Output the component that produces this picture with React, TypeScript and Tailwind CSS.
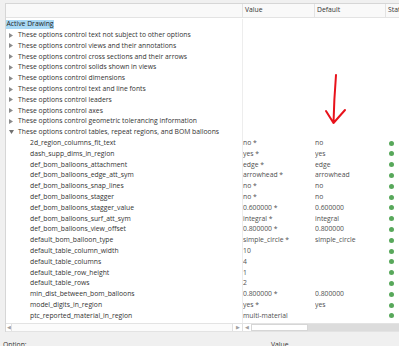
const categories = [
  "These options control text not subject to other options",
  "These options control views and their annotations",
  "These options control cross sections and their arrows",
  "These options control solids shown in views",
  "These options control dimensions",
  "These options control text and line fonts",
  "These options control leaders",
  "These options control axes",
  "These options control geometric tolerancing information",
];

const options: [string, string, string][] = [
  ["2d_region_columns_fit_text", "no *", "no"],
  ["dash_supp_dims_in_region", "yes *", "yes"],
  ["def_bom_balloons_attachment", "edge *", "edge"],
  ["def_bom_balloons_edge_att_sym", "arrowhead *", "arrowhead"],
  ["def_bom_balloons_snap_lines", "no *", "no"],
  ["def_bom_balloons_stagger", "no *", "no"],
  ["def_bom_balloons_stagger_value", "0.600000 *", "0.600000"],
  ["def_bom_balloons_surf_att_sym", "integral *", "integral"],
  ["def_bom_balloons_view_offset", "0.800000 *", "0.800000"],
  ["default_bom_balloon_type", "simple_circle *", "simple_circle"],
  ["default_table_column_width", "10", ""],
  ["default_table_columns", "4", ""],
  ["default_table_row_height", "1", ""],
  ["default_table_rows", "2", ""],
  ["min_dist_between_bom_balloons", "0.800000 *", "0.800000"],
  ["model_digits_in_region", "yes *", "yes"],
  ["ptc_reported_material_in_region", "multi-material", ""],
  ["reference_bom_balloon_text", "DEF *", "ref"],
];

function Caret({ open }: { open?: boolean }) {
  return open ? (
    <svg width="5" height="4" viewBox="0 0 5 4" className="ml-[3px] mr-[4px] shrink-0">
      <polygon points="0,0 5,0 2.5,4" fill="#707070" />
    </svg>
  ) : (
    <svg width="4" height="5" viewBox="0 0 4 5" className="ml-[3px] mr-[5px] shrink-0">
      <polygon points="0,0 4,2.5 0,5" fill="#8a8a8a" />
    </svg>
  );
}

function Row({
  tree,
  value = "",
  def = "",
  dot,
}: {
  tree: React.ReactNode;
  value?: string;
  def?: string;
  dot?: boolean;
}) {
  return (
    <div className="flex h-[10.8px] items-center whitespace-nowrap">
      <div className="w-[237px] shrink-0 flex items-center overflow-hidden border-r border-[#ededed] h-full">
        {tree}
      </div>
      <div className="w-[72px] shrink-0 text-[#505050] overflow-hidden">{value}</div>
      <div className="w-[71px] shrink-0 text-[#505050] overflow-hidden">{def}</div>
      <div className="flex-1 flex items-center">
        {dot && <span className="ml-[3px] w-[5px] h-[5px] rounded-full bg-[#58a85b]" />}
      </div>
    </div>
  );
}

export default function App() {
  return (
    <div
      className="w-[399px] h-[346px] overflow-hidden bg-[#f0f0f0] relative text-[6.8px] text-[#333333]"
      style={{ fontFamily: '"Open Sans", "Noto Sans", sans-serif' }}
    >
      <div className="h-[3px]" />
      <div className="ml-[5px] w-[420px] border-l border-t border-[#d6d6d6] bg-white flex flex-col h-[329px]">
        {/* header */}
        <div className="flex h-[14px] border-b border-[#e3e3e3] bg-[#f9f9f9] items-center whitespace-nowrap">
          <div className="w-[237px] h-full border-r border-[#e3e3e3]" />
          <div className="w-[72px] h-full border-r border-[#e3e3e3] pl-[2px] flex items-center">Value</div>
          <div className="w-[71px] h-full border-r border-[#e3e3e3] pl-[2px] flex items-center">Default</div>
          <div className="flex-1 pl-[2px] flex items-center">Status</div>
        </div>

        {/* body */}
        <div className="h-[304.5px] overflow-hidden pt-[1px]">
          <Row
            tree={
              <span className="bg-[#a9d9f5] h-[8.5px] leading-[8.5px] px-[0.5px] text-[#1e1e1e]">
                Active Drawing
              </span>
            }
          />
          {categories.map((c) => (
            <Row
              key={c}
              tree={
                <>
                  <Caret />
                  <span>{c}</span>
                </>
              }
            />
          ))}
          <Row
            tree={
              <>
                <Caret open />
                <span>These options control tables, repeat regions, and BOM balloons</span>
              </>
            }
          />
          {options.map(([name, value, def]) => (
            <Row
              key={name}
              tree={<span className="pl-[24px]">{name}</span>}
              value={value}
              def={def}
              dot
            />
          ))}
        </div>

        {/* horizontal scrollbars */}
        <div className="flex h-[9.5px] border-t border-b border-[#e3e3e3] text-[#a0a0a0] text-[5px]">
          <div className="w-[5px] flex items-center justify-center">◀</div>
          <div className="w-[222px] bg-[#fbfbfb] border-x border-[#e0e0e0]" />
          <div className="w-[9px] flex items-center justify-center">▶</div>
          <div className="w-[1px] bg-[#e0e0e0]" />
          <div className="w-[8px] flex items-center justify-center">◀</div>
          <div className="w-[57px] bg-white border border-[#d6d6d6]" />
          <div className="flex-1 bg-[#dcdcdc]" />
        </div>
      </div>

      {/* bottom panel */}
      <div className="flex pt-[8px] whitespace-nowrap">
        <div className="pl-[3px] w-[271px]">Option:</div>
        <div>Value</div>
      </div>

      {/* hand-drawn arrow */}
      <svg className="absolute left-0 top-0 pointer-events-none" width="399" height="346">
        <path
          d="M336 75 Q334 100 333.5 123 M326 111 L333.5 123 L345 110"
          fill="none"
          stroke="#e8121b"
          strokeWidth="2"
          strokeLinecap="round"
          strokeLinejoin="round"
        />
      </svg>
    </div>
  );
}
